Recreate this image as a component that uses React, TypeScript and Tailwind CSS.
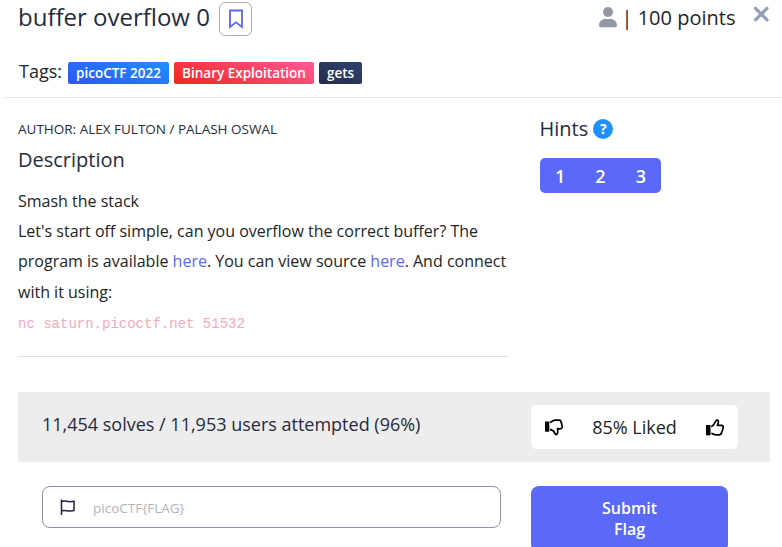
import React from "react";

function Bookmark() {
  return (
    <svg width="16" height="20" viewBox="0 0 16 20" fill="none" stroke="#5a67f8" strokeWidth="1.8">
      <path d="M2 1.500h12v16.500l-6-4.600-6 4.600z" />
    </svg>
  );
}

function Person() {
  return (
    <svg width="18" height="21" viewBox="0 0 18 21" fill="#9497a6">
      <circle cx="9" cy="5" r="5" />
      <path d="M0 18.800C0 14.400 3 12 6.200 12h5.600c3.200 0 6.200 2.400 6.200 6.800 0 .8-.5 1.400-1.300 1.400H1.300C.5 20.200 0 19.600 0 18.800z" />
    </svg>
  );
}

function ThumbUp() {
  return (
    <svg width="18" height="17" viewBox="0 0 18 17" fill="none" stroke="#000" strokeWidth="1.700" strokeLinejoin="round">
      <path d="M0 6h4.500v10.300H0z" fill="#000" stroke="none" />
      <path d="M5.300 7.700C7.500 6.700 8.700 4.500 9.800 2c.5-1.300 2.400-1.200 2.600.3.200 1.400-.6 2.700-1 4h4.100c1.700 0 2.100 1.300 1.500 2.500.1 1-.1 1.800-.6 2.400.1.900-.2 1.600-.8 2.100 0 1.600-.8 2.400-2.300 2.500h-3.100c-1.900 0-3-.8-4.900-1.500" />
    </svg>
  );
}

function ThumbDown() {
  return (
    <svg width="18" height="17" viewBox="0 0 18 17" fill="none" stroke="#000" strokeWidth="1.700" strokeLinejoin="round">
      <path d="M0 2.500h4.300v10.200H0z" fill="#000" stroke="none" />
      <path d="M5 3.600C6.600 2.600 8 1.200 10 1.200h4c1.300 0 2 .9 2 2.200.7.700.9 1.600.7 2.500.6.900.7 1.700.4 2.700-.4 1.100-1.400 1.300-2.600 1.200l-2-.2c.3 1.500.4 3-.1 4.800-.4 1.500-2.100 1.500-2.500.1C9.300 12.400 7.800 10.900 5 10.300" />
    </svg>
  );
}

function Flag() {
  return (
    <svg width="16" height="17" viewBox="0 0 16 17" fill="none" stroke="#1f2440" strokeWidth="1.500">
      <path d="M1.500.5v15.500M1.500 2.500c4-1.500 6 1.300 12.500-.3v9.400c-6.200 1.500-8.500-1.300-12.500.2" />
    </svg>
  );
}

export default function App() {
  return (
    <div className="h-[547px] w-[782px] overflow-hidden bg-white font-['Open_Sans',sans-serif] text-[#262b40]">
      <header className="ml-[3px] h-[98px] border-b border-[#e4e5e7] pl-[15px]">
        <div className="flex h-[36px] items-start">
          <h1 className="mt-px w-[201px] whitespace-nowrap text-[24px] leading-[32px]">buffer overflow 0</h1>
          <button className="mt-[2px] flex h-[34px] w-[33px] items-center justify-center rounded-[6px] border border-[#a9acb8]">
            <Bookmark />
          </button>
          <div className="ml-auto flex text-[20px] leading-[36px] text-[#212529]">
            <span className="mt-[7px] mr-[4.500px]"><Person /></span>
            <span className="w-[114.500px] whitespace-nowrap">| 100 points</span>
          </div>
          <button className="mt-[6px] mr-[13px] ml-[17px]">
            <svg width="16" height="16" viewBox="0 0 16 16" stroke="#93a0bd" strokeWidth="3.200" strokeLinecap="round">
              <path d="M2.500 2.300l11.500 11.500M14 2.300L2.500 13.800" />
            </svg>
          </button>
        </div>
        <div className="mt-[21px] flex h-[28px] items-center text-[18px] text-[#212529]">
          <span className="w-[50px] pl-px">Tags:</span>
          <div className="mt-[4px] flex gap-[5px] text-[13.500px] leading-[22px] font-semibold whitespace-nowrap text-white">
            <span className="w-[101px] rounded-[2px] bg-linear-[20deg,#2f55f4,#1e90fc] text-center">picoCTF 2022</span>
            <span className="w-[140px] rounded-[2px] bg-linear-[20deg,#f0281e,#ff5a98] text-center">Binary Exploitation</span>
            <span className="w-[43px] rounded-[2px] bg-linear-[20deg,#262b48,#2d4373] text-center">gets</span>
          </div>
        </div>
      </header>

      <main className="flex h-[294px] pl-[18px]">
        <section className="w-[491px]">
          <p className="mt-[21px] text-[13.500px] leading-[20px]">AUTHOR: ALEX FULTON / PALASH OSWAL</p>
          <h2 className="mt-[8px] text-[20px] leading-[26px]">Description</h2>
          <div className="mt-[12.600px] text-[16px] leading-[30.400px] whitespace-nowrap text-[#212529]">
            <p>Smash the stack</p>
            <p>Let's start off simple, can you overflow the correct buffer? The</p>
            <p>program is available <a className="text-[#5a67f8]">here</a>. You can view source <a className="text-[#5a67f8]">here</a>. And connect</p>
            <p>with it using:</p>
            <p className="pt-[1.500px] font-['Liberation_Mono',monospace] text-[14px] text-[#f5a8bd]">nc saturn.picoctf.net 51532</p>
          </div>
          <hr className="mt-[16.400px] border-[#e0e1e3]" />
        </section>
        <aside className="ml-[31px]">
          <div className="mt-[17px] flex h-[28px] items-center gap-[5px] text-[20px]">
            <span className="-ml-[0.500px]">Hints</span>
            <span className="h-[20px] w-[20px] rounded-full bg-[#1e90ff] text-center text-[14px] leading-[20px] font-bold text-white">?</span>
          </div>
          <div className="mt-[15px] flex h-[35px] w-[121px] rounded-[5px] bg-[#5a69f8] text-center text-[18px] leading-[36px] font-semibold text-white">
            <span className="flex-1">1</span>
            <span className="flex-1">2</span>
            <span className="flex-1">3</span>
          </div>
        </aside>
      </main>

      <section className="ml-[18px] flex h-[70px] w-[752px] items-center bg-[#ededed] pl-[24px]">
        <p className="w-[489px] pb-[5px] text-[18px]">11,454 solves / 11,953 users attempted (96%)</p>
        <div className="flex h-[44px] w-[207px] items-center justify-between rounded-[5px] bg-white px-[14px] text-[18px] text-[#212529]">
          <ThumbDown />
          <span>85% Liked</span>
          <ThumbUp />
        </div>
      </section>

      <form className="mt-[24px] flex items-start pl-[42px]">
        <div className="flex h-[42px] w-[459px] items-center rounded-[8px] border border-[#8f91a3] pl-[17px]">
          <Flag />
          <span className="ml-[17px] pt-[2px] text-[13.500px] text-[#b0b3c0]">picoCTF&#123;FLAG&#125;</span>
        </div>
        <button type="button" className="ml-[30px] h-[66px] w-[197px] rounded-[8px] bg-[#5a69f8] text-[16px] leading-[21px] font-semibold text-white">
          Submit<br />Flag
        </button>
      </form>
    </div>
  );
}
